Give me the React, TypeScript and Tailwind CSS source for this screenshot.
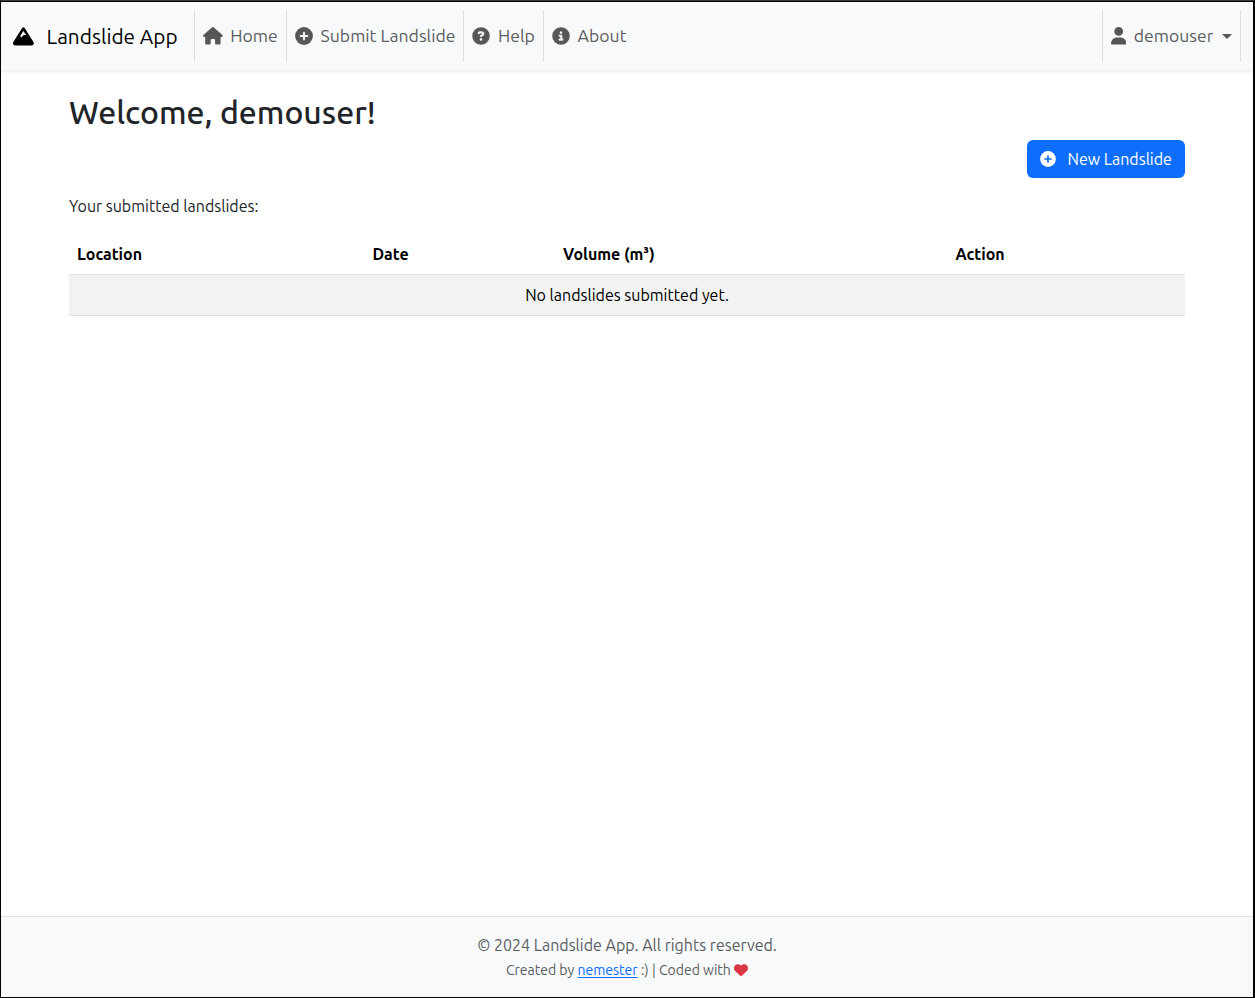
import type { ReactNode } from "react";
import { FaCircleInfo, FaCircleQuestion, FaHeart, FaHouse, FaMountain, FaUser } from "react-icons/fa6";

function PlusBadge({ className, cross }: { className: string; cross: string }) {
  return (
    <svg viewBox="0 0 18 18" className={className}>
      <circle cx="9" cy="9" r="8.9" fill="currentColor" />
      <path d="M9 5.6v6.8M5.6 9h6.8" stroke={cross} strokeWidth="1.9" strokeLinecap="round" />
    </svg>
  );
}

function NavItem({ width, icon, children }: { width: string; icon: ReactNode; children: ReactNode }) {
  return (
    <a
      className={`flex h-[52px] shrink-0 items-center border-l border-[#dcdee1] pl-2 whitespace-nowrap text-[#5c5d5f] ${width}`}
    >
      {icon}
      {children}
    </a>
  );
}

export default function App() {
  return (
    <div className="flex h-[998px] w-[1255px] flex-col overflow-hidden border-t border-r-2 border-b border-l border-t-[#3a3a3a] border-r-black border-b-black border-l-black bg-white font-['Ubuntu','Open_Sans',sans-serif] font-normal text-[#212529]">
      <nav className="z-10 flex h-[69px] shrink-0 items-start border-t border-black bg-[#f8f9fa] pt-2 text-[17.6px] shadow-[0_2px_4px_rgba(0,0,0,0.08)]">
        <a className="flex h-[52px] w-[193px] shrink-0 items-center gap-[12.6px] pl-[12.2px] text-[20.8px] whitespace-nowrap text-black">
          <FaMountain className="size-[20.8px]" />
          <span className="mt-px">Landslide App</span>
        </a>
        <NavItem width="w-[92px]" icon={<FaHouse className="mr-[7.5px] h-[17.6px] w-[19.8px] text-[#555657]" />}>
          <span>Home</span>
        </NavItem>
        <NavItem
          width="w-[177px]"
          icon={<PlusBadge className="mr-[7.6px] size-[18px] text-[#555657]" cross="#f8f9fa" />}
        >
          <span>Submit Landslide</span>
        </NavItem>
        <NavItem
          width="w-[80px]"
          icon={<FaCircleQuestion className="mr-2 size-[18px] stroke-[#f8f9fa] stroke-[12px] text-[#555657]" />}
        >
          <span>Help</span>
        </NavItem>
        <NavItem
          width="w-[100px]"
          icon={<FaCircleInfo className="mr-[7.6px] size-[18px] stroke-[#f8f9fa] stroke-[12px] text-[#555657]" />}
        >
          <span>About</span>
        </NavItem>
        <div className="mr-[12px] ml-auto flex border-r border-[#dcdee1]">
          <NavItem width="w-[138px]" icon={<FaUser className="mr-[7.4px] h-[17.6px] w-[15.4px] text-[#555657]" />}>
            <span className="mr-2 w-[80px]">demouser</span>
            <i className="border-x-[5px] border-t-[5px] border-x-transparent border-t-[#555657]" />
          </NavItem>
        </div>
      </nav>

      <main className="flex-1 px-[68px] pt-[23px]">
        <h2 className="h-[47px] text-[32px] leading-[38px] font-medium">Welcome, demouser!</h2>
        <div className="flex justify-end">
          <button className="flex h-[38px] w-[158px] items-center gap-[11.5px] rounded-md bg-[#0d6efd] pl-[13px] text-[16px] whitespace-nowrap text-white">
            <PlusBadge className="size-4" cross="#0d6efd" />
            <span>New Landslide</span>
          </button>
        </div>
        <p className="mt-4 mb-4 h-6 text-[16px] leading-6">Your submitted landslides:</p>
        <table className="w-[1116px] table-fixed border-separate border-spacing-0 text-left text-[16px] leading-6 text-black">
          <colgroup>
            <col className="w-[295px]" />
            <col className="w-[191px]" />
            <col className="w-[392px]" />
            <col className="w-[238px]" />
          </colgroup>
          <thead>
            <tr>
              <th className="border-b border-[#dee2e6] p-2 font-bold">Location</th>
              <th className="border-b border-[#dee2e6] p-2 pl-[8.4px] font-bold">Date</th>
              <th className="border-b border-[#dee2e6] p-2 font-bold">Volume (m³)</th>
              <th className="border-b border-[#dee2e6] p-2 pl-[8.4px] font-bold">Action</th>
            </tr>
          </thead>
          <tbody>
            <tr>
              <td colSpan={4} className="border-b border-[#dee2e6] bg-[#f2f2f2] p-2 text-center">
                No landslides submitted yet.
              </td>
            </tr>
          </tbody>
        </table>
      </main>

      <footer className="h-[81px] shrink-0 border-t border-[#dee2e6] bg-[#f8f9fa] pt-4 text-center text-[#5b5e62]">
        <p className="text-[16px] leading-6">© 2024 Landslide App. All rights reserved.</p>
        <p className="flex h-[26px] items-center justify-center gap-[3.3px] text-[14px] leading-6">
          <span>Created by</span>
          <a className="text-[#0d6efd] underline underline-offset-2">nemester</a>
          <span>:) | Coded with</span>
          <FaHeart className="size-[14px] text-[#dc3545]" />
        </p>
      </footer>
    </div>
  );
}
